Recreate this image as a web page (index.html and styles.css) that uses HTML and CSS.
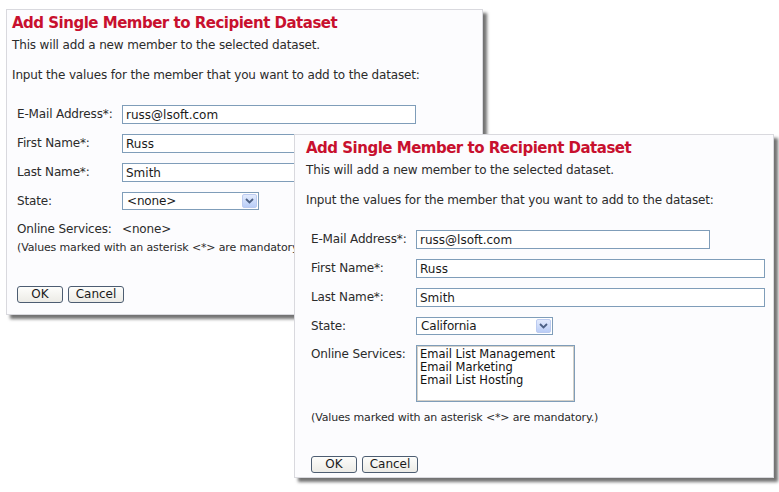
FILE: index.html
```html
<!DOCTYPE html>
<html>
<head>
<meta charset="utf-8">
<title>Add Single Member to Recipient Dataset</title>
<link rel="stylesheet" href="styles.css">
</head>
<body>
<div class="desktop">

  <div class="dialog dialog-back">
    <h1 class="title">Add Single Member to Recipient Dataset</h1>
    <p class="intro">This will add a new member to the selected dataset.</p>
    <p class="prompt">Input the values for the member that you want to add to the dataset:</p>
    <div class="form">
      <label>E-Mail Address*:</label>
      <input class="field field-email" type="text" value="russ@lsoft.com">
      <label>First Name*:</label>
      <input class="field" type="text" value="Russ">
      <label>Last Name*:</label>
      <input class="field" type="text" value="Smith">
      <label>State:</label>
      <div class="select">
        <span class="select-value">&lt;none&gt;</span>
        <span class="arrow"><svg width="9" height="6" viewBox="0 0 9 6"><path d="M1 1l3.5 3.5L8 1" fill="none" stroke="#4d6185" stroke-width="1.8"/></svg></span>
      </div>
      <label>Online Services:</label>
      <div class="plain">&lt;none&gt;</div>
    </div>
    <p class="note">(Values marked with an asterisk &lt;*&gt; are mandatory.)</p>
    <div class="buttons">
      <button class="btn btn-ok">OK</button>
      <button class="btn btn-cancel">Cancel</button>
    </div>
  </div>

  <div class="dialog dialog-front">
    <h1 class="title">Add Single Member to Recipient Dataset</h1>
    <p class="intro">This will add a new member to the selected dataset.</p>
    <p class="prompt">Input the values for the member that you want to add to the dataset:</p>
    <div class="form">
      <label>E-Mail Address*:</label>
      <input class="field field-email" type="text" value="russ@lsoft.com">
      <label>First Name*:</label>
      <input class="field" type="text" value="Russ">
      <label>Last Name*:</label>
      <input class="field" type="text" value="Smith">
      <label>State:</label>
      <div class="select">
        <span class="select-value">California</span>
        <span class="arrow"><svg width="9" height="6" viewBox="0 0 9 6"><path d="M1 1l3.5 3.5L8 1" fill="none" stroke="#4d6185" stroke-width="1.8"/></svg></span>
      </div>
      <label>Online Services:</label>
      <div class="listbox">
        <div class="option">Email List Management</div>
        <div class="option">Email Marketing</div>
        <div class="option">Email List Hosting</div>
      </div>
    </div>
    <p class="note">(Values marked with an asterisk &lt;*&gt; are mandatory.)</p>
    <div class="buttons">
      <button class="btn btn-ok">OK</button>
      <button class="btn btn-cancel">Cancel</button>
    </div>
  </div>

</div>
</body>
</html>
```

FILE: styles.css
```css
html, body {
  margin: 0;
  background: #fff;
}
body {
  font-family: "DejaVu Sans", Verdana, sans-serif;
  font-size: 12px;
  letter-spacing: -0.15px;
  color: #2b2b2b;
}
.desktop {
  position: relative;
  width: 779px;
  height: 492px;
  overflow: hidden;
}

/* the two overlapping dialog windows */
.dialog {
  position: absolute;
  box-sizing: border-box;
  background: #fcfcfe;
  border: 1px solid #d9d9de;
  box-shadow: 4px 4px 3px rgba(0, 0, 0, 0.55);
}
.dialog-back {
  left: 6px;
  top: 9px;
  width: 477px;
  height: 306px;
  padding: 4px 8px 0 5px;
}
.dialog-front {
  left: 294px;
  top: 134px;
  width: 480px;
  height: 344px;
  padding: 4px 8px 0 11px;
}

.title {
  margin: 0;
  font-size: 15px;
  line-height: 19px;
  letter-spacing: -0.5px;
  font-weight: bold;
  color: #c8102e;
}
.intro {
  margin: 4px 0 0;
  line-height: 16px;
}
.prompt {
  margin: 14px 0 0;
  line-height: 16px;
}

.form {
  display: grid;
  grid-template-columns: 105px 1fr;
  row-gap: 10px;
  align-items: start;
  margin: 22px 0 0 5px;
}
.form label {
  line-height: 16px;
  padding-top: 1px;
}
.field {
  box-sizing: border-box;
  width: 100%;
  height: 19px;
  margin: 0;
  padding: 0 3px;
  border: 1px solid #7f9db9;
  background: #fff;
  font: inherit;
  color: #1a1a1a;
}
.field-email {
  width: 294px;
}

.select {
  box-sizing: border-box;
  display: flex;
  align-items: center;
  justify-content: space-between;
  width: 137px;
  height: 18px;
  padding-left: 4px;
  border: 1px solid #7f9db9;
  background: #fff;
  color: #1a1a1a;
}
.arrow {
  display: flex;
  align-items: center;
  justify-content: center;
  box-sizing: border-box;
  width: 15px;
  height: 14px;
  margin-right: 1px;
  border: 1px solid #bccbf0;
  border-radius: 2px;
  background: linear-gradient(#e3ebfd, #b9cdf7);
}
.plain {
  line-height: 16px;
  padding-top: 1px;
}

.listbox {
  box-sizing: border-box;
  width: 159px;
  height: 57px;
  padding: 2px 3px;
  border: 1px solid #7f9db9;
  box-shadow: inset 0 0 0 1px #d4d0c8;
  background: #fff;
  font-size: 11.5px;
  letter-spacing: 0;
  color: #111;
}
.option {
  line-height: 13px;
}

.note {
  margin: 8px 0 0 5px;
  font-size: 11px;
  line-height: 16px;
}
.dialog-back .note {
  margin-top: 3px;
}

.buttons {
  display: flex;
  gap: 5px;
  margin: 30px 0 0 5px;
}
.btn {
  box-sizing: border-box;
  height: 17px;
  padding: 0;
  border: 1px solid #4d5d72;
  border-radius: 3px;
  background: linear-gradient(#fdfdfb, #ecebe6);
  font: inherit;
  line-height: 15px;
  color: #1a1a1a;
}
.btn-ok {
  width: 46px;
}
.btn-cancel {
  width: 56px;
}
```
